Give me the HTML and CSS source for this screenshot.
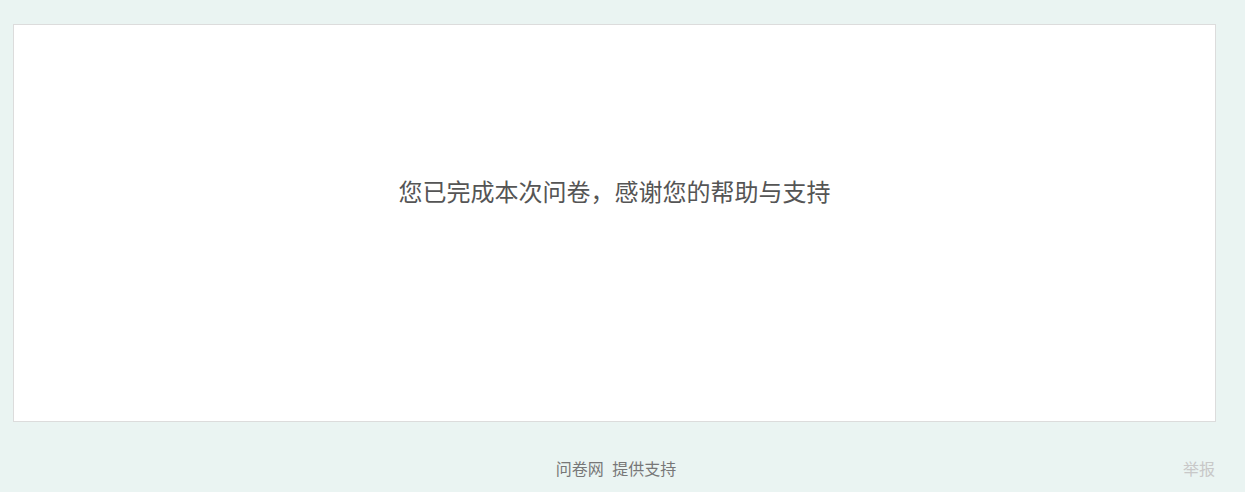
FILE: index.html
```html
<!DOCTYPE html>
<html lang="zh-CN">

<head>
    <meta charset="UTF-8">
    <meta name="viewport" content="width=device-width, initial-scale=1.0">
    <title>问卷网</title>
    <link rel="stylesheet" href="styles.css">
</head>

<body>
    <div class="page">
        <div class="card">
            <p class="done">您已完成本次问卷，感谢您的帮助与支持</p>
        </div>
        <div class="footer">
            <span class="support"><a href="#">问卷网</a> 提供支持</span>
            <a class="report" href="#">举报</a>
        </div>
    </div>
</body>

</html>
```

FILE: styles.css
```css
body {
    margin: 0;
    background-color: #eaf4f2;
    font-family: "Microsoft YaHei", "Noto Sans CJK SC", sans-serif;
}
.page {
    width: 1203px;
    padding: 24px 0 0 13px;
}
.card {
    height: 396px;
    background-color: #fff;
    border: 1px solid #dcdcdc;
    padding-top: 150px;
    box-sizing: content-box;
    height: 246px;
    text-align: center;
}
.done {
    margin: 0;
    font-size: 24px;
    line-height: 32px;
    color: #555;
}

.footer {
    position: relative;
    height: 70px;
    display: flex;
    justify-content: center;
    padding-top: 36px;
    box-sizing: border-box;
    font-size: 16px;
    line-height: 20px;
}
.support {
    color: #777;
    margin-left: 3px;
}
.support a {
    color: #777;
    text-decoration: none;
    margin-right: 5px;
}
.report {
    position: absolute;
    right: 1px;
    top: 36px;
    color: #c8c8c8;
    text-decoration: none;
}
```
